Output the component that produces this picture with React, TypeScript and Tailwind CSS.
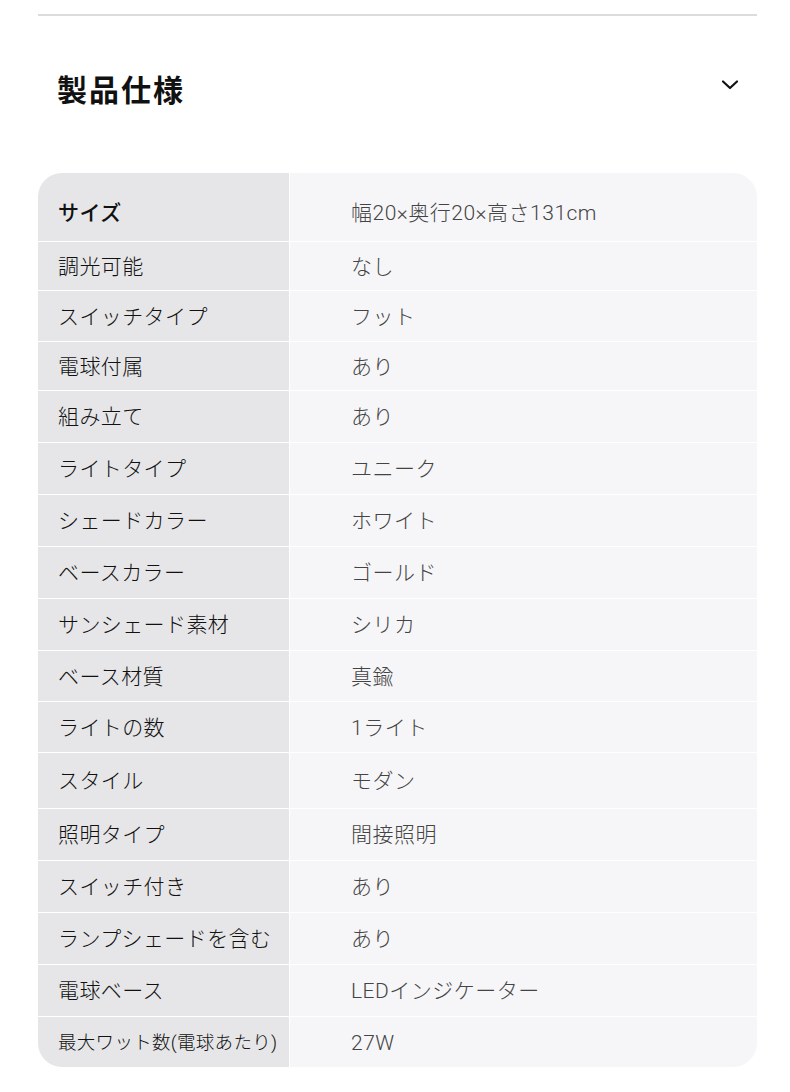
import React from "react";

const rows: { label: string; value: string; h: number }[] = [
  { label: "サイズ", value: "幅20×奥行20×高さ131cm", h: 68 },
  { label: "調光可能", value: "なし", h: 49 },
  { label: "スイッチタイプ", value: "フット", h: 51 },
  { label: "電球付属", value: "あり", h: 49 },
  { label: "組み立て", value: "あり", h: 52 },
  { label: "ライトタイプ", value: "ユニーク", h: 52 },
  { label: "シェードカラー", value: "ホワイト", h: 52 },
  { label: "ベースカラー", value: "ゴールド", h: 52 },
  { label: "サンシェード素材", value: "シリカ", h: 52 },
  { label: "ベース材質", value: "真鍮", h: 51 },
  { label: "ライトの数", value: "1ライト", h: 51 },
  { label: "スタイル", value: "モダン", h: 56 },
  { label: "照明タイプ", value: "間接照明", h: 52 },
  { label: "スイッチ付き", value: "あり", h: 52 },
  { label: "ランプシェードを含む", value: "あり", h: 52 },
  { label: "電球ベース", value: "LEDインジケーター", h: 52 },
  { label: "最大ワット数(電球あたり)", value: "27W", h: 51 },
];

export default function App() {
  return (
    <div
      className="w-[790px] min-h-[1092px] bg-white pt-[14px]"
      style={{ fontFamily: 'Roboto, "Noto Sans CJK JP", "Noto Sans", sans-serif' }}
    >
      <div className="ml-[38px] w-[719px]">
        <div className="h-[2px] bg-[#dcdcdc]" />
        <div className="mt-[50px] flex h-[48px] items-center justify-between">
          <h2 className="pl-[19px] text-[30px] font-bold tracking-[2px] text-[#111]">製品仕様</h2>
          <svg
            className="mr-[17px] -mt-[10px]"
            width="20"
            height="20"
            viewBox="0 0 20 20"
            fill="none"
            stroke="#111"
            strokeWidth="2.2"
            strokeLinecap="round"
            strokeLinejoin="round"
          >
            <path d="M3 6.5 L10 13 L17 6.5" />
          </svg>
        </div>
        <div className="mt-[59px] overflow-hidden rounded-[24px]">
          {rows.map((r, i) => (
            <div
              key={r.label}
              className={`flex ${i > 0 ? "border-t border-white" : ""}`}
              style={{ height: r.h }}
            >
              <div
                className={`flex w-[252px] shrink-0 items-center border-r border-white bg-[#e6e6e8] pl-[20px] text-[#111] ${
                  i === 0 ? "pt-[13px] font-medium" : "pt-[3px] font-light"
                } ${i === rows.length - 1 ? "text-[18.5px] tracking-[0.3px]" : "text-[21px] tracking-[0.4px]"}`}
              >
                {r.label}
              </div>
              <div
                className={`flex flex-1 items-center bg-[#f6f6f8] pl-[61px] text-[21px] font-light tracking-[0.5px] text-[#444] ${
                  i === 0 ? "pt-[13px]" : "pt-[3px]"
                }`}
              >
                {r.value}
              </div>
            </div>
          ))}
        </div>
      </div>
    </div>
  );
}
